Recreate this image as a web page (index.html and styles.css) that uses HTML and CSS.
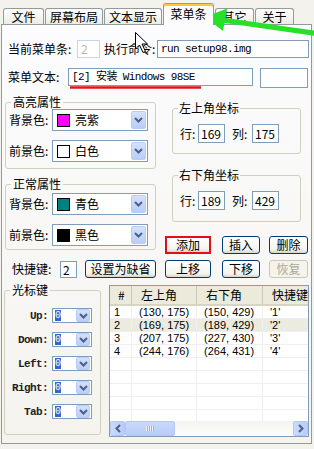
FILE: index.html
```html
<!DOCTYPE html>
<html lang="zh-CN">
<head>
    <meta charset="UTF-8">
    <meta name="viewport" content="width=device-width, initial-scale=1.0">
    <title>菜单条设置</title>
    <link rel="stylesheet" href="styles.css">
</head>
<body>
    <div class="tabs">
        <div class="tab tab-file">文件</div>
        <div class="tab tab-screen">屏幕布局</div>
        <div class="tab tab-text">文本显示</div>
        <div class="tab tab-menu active">菜单条</div>
        <div class="tab tab-other">其它</div>
        <div class="tab tab-about">关于</div>
    </div>

    <div class="page">
        <div class="row row-top">
            <label class="lbl lbl-cur">当前菜单条:</label>
            <input class="edit edit-idx" type="text" value="2" disabled>
            <label class="lbl lbl-cmd">执行命令:</label>
            <input class="edit edit-cmd mono" type="text" value="run setup98.img">
        </div>

        <div class="row row-text">
            <label class="lbl lbl-text">菜单文本:</label>
            <input class="edit edit-text mono" type="text" value="[2] 安装 Windows 98SE">
            <input class="edit edit-extra" type="text" value="">
        </div>

        <div class="middle">
            <div class="col-left">
                <fieldset class="group group-hi">
                    <legend>高亮属性</legend>
                    <div class="field">
                        <label class="lbl-color">背景色:</label>
                        <div class="combo">
                            <span class="swatch sw-magenta"></span>
                            <span class="combo-text">亮紫</span>
                            <span class="drop">
                                <svg width="9" height="6" viewBox="0 0 9 6"><path d="M1 1 L4.5 4.5 L8 1" fill="none" stroke="#4d6185" stroke-width="2"/></svg>
                            </span>
                        </div>
                    </div>
                    <div class="field">
                        <label class="lbl-color">前景色:</label>
                        <div class="combo">
                            <span class="swatch sw-white"></span>
                            <span class="combo-text">白色</span>
                            <span class="drop">
                                <svg width="9" height="6" viewBox="0 0 9 6"><path d="M1 1 L4.5 4.5 L8 1" fill="none" stroke="#4d6185" stroke-width="2"/></svg>
                            </span>
                        </div>
                    </div>
                </fieldset>

                <fieldset class="group group-normal">
                    <legend>正常属性</legend>
                    <div class="field">
                        <label class="lbl-color">背景色:</label>
                        <div class="combo">
                            <span class="swatch sw-teal"></span>
                            <span class="combo-text">青色</span>
                            <span class="drop">
                                <svg width="9" height="6" viewBox="0 0 9 6"><path d="M1 1 L4.5 4.5 L8 1" fill="none" stroke="#4d6185" stroke-width="2"/></svg>
                            </span>
                        </div>
                    </div>
                    <div class="field">
                        <label class="lbl-color">前景色:</label>
                        <div class="combo">
                            <span class="swatch sw-black"></span>
                            <span class="combo-text">黑色</span>
                            <span class="drop">
                                <svg width="9" height="6" viewBox="0 0 9 6"><path d="M1 1 L4.5 4.5 L8 1" fill="none" stroke="#4d6185" stroke-width="2"/></svg>
                            </span>
                        </div>
                    </div>
                </fieldset>

                <div class="hotkey-row">
                    <label class="lbl-key">快捷键:</label>
                    <input class="edit edit-key" type="text" value="2">
                    <button class="btn btn-default">设置为缺省</button>
                </div>
            </div>

            <div class="col-right">
                <fieldset class="group group-pos">
                    <legend>左上角坐标</legend>
                    <div class="pos-row">
                        <label class="lbl-row">行:</label>
                        <input class="edit edit-pos" type="text" value="169">
                        <label class="lbl-col">列:</label>
                        <input class="edit edit-pos" type="text" value="175">
                    </div>
                </fieldset>

                <fieldset class="group group-pos group-pos2">
                    <legend>右下角坐标</legend>
                    <div class="pos-row">
                        <label class="lbl-row">行:</label>
                        <input class="edit edit-pos" type="text" value="189">
                        <label class="lbl-col">列:</label>
                        <input class="edit edit-pos" type="text" value="429">
                    </div>
                </fieldset>

                <div class="btn-row btn-row-1">
                    <button class="btn btn-a marked">添加</button>
                    <button class="btn btn-b">插入</button>
                    <button class="btn btn-c">删除</button>
                </div>
                <div class="btn-row btn-row-2">
                    <button class="btn btn-a">上移</button>
                    <button class="btn btn-b">下移</button>
                    <button class="btn btn-c" disabled>恢复</button>
                </div>
            </div>
        </div>

        <div class="bottom">
            <fieldset class="group group-keys">
                <legend>光标键</legend>
                <div class="key-row">
                    <label class="lbl-dir">Up:</label>
                    <div class="combo combo-small"><span class="sel">0</span><span class="drop"><svg width="9" height="6" viewBox="0 0 9 6"><path d="M1 1 L4.5 4.5 L8 1" fill="none" stroke="#4d6185" stroke-width="2"/></svg></span></div>
                </div>
                <div class="key-row">
                    <label class="lbl-dir">Down:</label>
                    <div class="combo combo-small"><span class="sel">0</span><span class="drop"><svg width="9" height="6" viewBox="0 0 9 6"><path d="M1 1 L4.5 4.5 L8 1" fill="none" stroke="#4d6185" stroke-width="2"/></svg></span></div>
                </div>
                <div class="key-row">
                    <label class="lbl-dir">Left:</label>
                    <div class="combo combo-small"><span class="sel">0</span><span class="drop"><svg width="9" height="6" viewBox="0 0 9 6"><path d="M1 1 L4.5 4.5 L8 1" fill="none" stroke="#4d6185" stroke-width="2"/></svg></span></div>
                </div>
                <div class="key-row">
                    <label class="lbl-dir">Right:</label>
                    <div class="combo combo-small"><span class="sel">0</span><span class="drop"><svg width="9" height="6" viewBox="0 0 9 6"><path d="M1 1 L4.5 4.5 L8 1" fill="none" stroke="#4d6185" stroke-width="2"/></svg></span></div>
                </div>
                <div class="key-row">
                    <label class="lbl-dir">Tab:</label>
                    <div class="combo combo-small"><span class="sel">0</span><span class="drop"><svg width="9" height="6" viewBox="0 0 9 6"><path d="M1 1 L4.5 4.5 L8 1" fill="none" stroke="#4d6185" stroke-width="2"/></svg></span></div>
                </div>
            </fieldset>

            <div class="list">
                <div class="list-head">
                    <span class="lh lh-no">#</span>
                    <span class="lh">左上角</span>
                    <span class="lh">右下角</span>
                    <span class="lh">快捷键</span>
                </div>
                <div class="list-body">
                    <div class="list-row"><span>1</span><span>(130, 175)</span><span>(150, 429)</span><span>'1'</span></div>
                    <div class="list-row selected"><span>2</span><span>(169, 175)</span><span>(189, 429)</span><span>'2'</span></div>
                    <div class="list-row"><span>3</span><span>(207, 175)</span><span>(227, 430)</span><span>'3'</span></div>
                    <div class="list-row"><span>4</span><span>(244, 176)</span><span>(264, 431)</span><span>'4'</span></div>
                    <div class="list-row"><span></span><span></span><span></span><span></span></div>
                    <div class="list-row"><span></span><span></span><span></span><span></span></div>
                    <div class="list-row"><span></span><span></span><span></span><span></span></div>
                    <div class="list-row"><span></span><span></span><span></span><span></span></div>
                    <div class="list-row"><span></span><span></span><span></span><span></span></div>
                </div>
                <div class="hscroll">
                    <span class="sb-btn">
                        <svg width="6" height="9" viewBox="0 0 6 9"><path d="M5 1 L1.5 4.5 L5 8" fill="none" stroke="#4d6185" stroke-width="2"/></svg>
                    </span>
                    <span class="sb-thumb">
                        <svg width="8" height="5" viewBox="0 0 8 5"><path d="M0.5 0 V5 M2.5 0 V5 M4.5 0 V5 M6.5 0 V5" stroke="#eef3ff" stroke-width="1"/><path d="M1.5 0 V5 M3.5 0 V5 M5.5 0 V5 M7.5 0 V5" stroke="#8cb0f8" stroke-width="1"/></svg>
                    </span>
                    <span class="sb-track"></span>
                    <span class="sb-btn">
                        <svg width="6" height="9" viewBox="0 0 6 9"><path d="M1 1 L4.5 4.5 L1 8" fill="none" stroke="#4d6185" stroke-width="2"/></svg>
                    </span>
                </div>
            </div>
        </div>
    </div>

    <!-- annotations drawn over the screenshot -->
    <svg class="overlay" width="314" height="449" viewBox="0 0 314 449">
        <line x1="70" y1="87.5" x2="201" y2="87.5" stroke="#e01414" stroke-width="2.5"/>
        <line x1="320" y1="34" x2="222" y2="20" stroke="#27e027" stroke-width="5"/>
        <polygon points="205,17 227,8.5 223,31" fill="#27e027"/>
        <path d="M135.5 32.5 V49 L139.5 45 L143 52.5 L145.5 51.5 L142 44 L147.5 44 Z" fill="#fff" stroke="#000" stroke-width="1"/>
    </svg>
</body>
</html>
```

FILE: styles.css
```css
* {
    box-sizing: border-box;
    margin: 0;
    padding: 0;
}

body {
    position: relative;
    width: 314px;
    height: 449px;
    overflow: hidden;
    background-color: #f3f2ec;
    font-family: "Noto Sans CJK SC", sans-serif;
    font-size: 12px;
    line-height: 14px;
    color: #000;
}

input, button {
    font: inherit;
    color: inherit;
}

.mono {
    font-family: "Liberation Mono", "Noto Sans CJK SC", monospace;
    font-size: 11px;
    letter-spacing: -0.6px;
}

/* tab strip */
.tabs {
    display: flex;
    align-items: flex-end;
    height: 24px;
    padding-left: 3px;
}

.tab {
    height: 16px;
    margin-right: 1px;
    border: 1px solid #919b9c;
    border-bottom: none;
    border-radius: 3px 3px 0 0;
    background: linear-gradient(#ffffff, #ecebe5);
    text-align: center;
    line-height: 15px;
}

.tab-file { width: 41px; }
.tab-screen { width: 58px; }
.tab-text { width: 58px; }
.tab-other { width: 39px; }
.tab-about { width: 39px; }

.tab.active {
    position: relative;
    z-index: 1;
    width: 51px;
    height: 22px;
    margin-bottom: -1px;
    padding-top: 3px;
    border-top-color: #e68b2c;
    background: #fcfcfe;
    box-shadow: inset 0 2px 0 #ffc83c;
    line-height: 14px;
}

/* page */
.page {
    width: 311px;
    height: 420px;
    margin-left: 1px;
    border: 1px solid #919b9c;
    background: linear-gradient(#fcfcfe, #f4f3ee);
}

.row {
    display: flex;
    align-items: flex-start;
    padding-left: 6px;
    line-height: 18px;
}

.row-top {
    margin-top: 15px;
    height: 18px;
}

.row-text {
    margin-top: 10px;
    height: 20px;
}

.lbl-cur { width: 69px; }
.lbl-cmd { width: 53px; margin-left: 4px; }
.lbl-text { width: 60px; }

.edit {
    height: 18px;
    border: 1px solid #7f9db9;
    background: #fff;
    padding: 0 3px;
    outline: none;
}

.edit:disabled {
    border-color: #c9d6e3;
    color: #b8b6a8;
}

.edit-idx { width: 23px; }
.edit-cmd { width: 152px; }
.edit-text { width: 185px; }
.edit-extra { width: 48px; height: 20px; margin-left: 7px; }

/* middle area */
.middle {
    display: flex;
}

.col-left {
    width: 154px;
    padding-left: 3px;
}

.col-right {
    width: 152px;
    padding-left: 9px;
}

.group {
    min-width: 0;
    border: 1px solid #d0d0bf;
    border-radius: 3px;
}

.group legend {
    padding: 0 2px;
    line-height: 14px;
}

.group-hi,
.group-normal {
    width: 151px;
    padding: 0 4px 6px 3px;
}

.group-hi legend,
.group-normal legend {
    margin-left: 2px;
}

.group-hi {
    margin-top: 7px;
}

.group-normal {
    margin-top: 8px;
    padding-top: 2px;
    padding-bottom: 3px;
}

.field {
    display: flex;
    align-items: center;
    height: 22px;
}

.field + .field {
    margin-top: 9px;
}

.lbl-color {
    width: 43px;
}

.combo {
    display: flex;
    align-items: center;
    width: 96px;
    height: 22px;
    padding: 0 1px 0 4px;
    border: 1px solid #7f9db9;
    background: #fff;
}

.swatch {
    width: 13px;
    height: 13px;
    border: 1px solid #000;
}

.sw-magenta { background: #ff00ff; }
.sw-white { background: #fff; }
.sw-teal { background: #008080; }
.sw-black { background: #000; }

.combo-text {
    margin-left: 5px;
}

.drop {
    display: flex;
    align-items: center;
    justify-content: center;
    width: 15px;
    height: 18px;
    margin-left: auto;
    border: 1px solid #b9cdf6;
    border-radius: 2px;
    background: linear-gradient(#d4e1fd, #b9cdf8);
}

.hotkey-row {
    display: flex;
    align-items: center;
    height: 18px;
    margin-top: 10px;
    padding-left: 7px;
}

.lbl-key {
    width: 48px;
}

.edit-key {
    width: 17px;
    height: 17px;
    padding: 0 2px;
}

.btn {
    height: 18px;
    border: 1px solid #003c74;
    border-radius: 3px;
    background: linear-gradient(#ffffff, #f3f3ee 80%, #d8d3c6);
    line-height: 16px;
    text-align: center;
}

.btn:disabled {
    border-color: #c9c7ba;
    color: #aca899;
    background: #f5f4ea;
}

.btn-default {
    width: 71px;
    margin-left: 8px;
}

.group-pos {
    width: 129px;
    margin-left: 7px;
    margin-top: 13px;
    padding: 9px 0 10px 7px;
}

.group-pos legend {
    margin-left: -2px;
    padding: 0 1px;
}

.group-pos2 {
    margin-top: 14px;
    padding-bottom: 11px;
}

.pos-row {
    display: flex;
    align-items: center;
    height: 19px;
}

.lbl-row { width: 18px; }
.lbl-col { width: 20px; margin-left: 7px; }

.edit-pos {
    width: 27px;
    height: 19px;
    padding: 0 2px;
}

.btn-row {
    display: flex;
}

.btn-row-1 { margin-top: 14px; }
.btn-row-2 { margin-top: 6px; }

.btn-a { width: 46px; }
.btn-b { width: 38px; margin-left: 11px; }
.btn-c { width: 39px; margin-left: 9px; }

.btn.marked {
    border: 2px solid #e0101a;
    border-radius: 0;
    line-height: 14px;
}

/* bottom area */
.bottom {
    display: flex;
    align-items: flex-start;
    padding-left: 2px;
}

.group-keys {
    width: 97px;
    margin-top: 5px;
    padding: 11px 0 15px 1px;
}

.group-keys legend {
    margin-left: 4px;
}

.key-row {
    display: flex;
    align-items: center;
    height: 15px;
}

.key-row + .key-row {
    margin-top: 9px;
}

.lbl-dir {
    width: 46px;
    padding-right: 4px;
    text-align: right;
    font-family: "Liberation Mono", monospace;
    font-size: 11px;
    letter-spacing: -0.6px;
    font-weight: bold;
    color: #222;
}

.combo-small {
    width: 40px;
    height: 15px;
    padding: 0 1px 0 2px;
}

.combo-small .drop {
    width: 14px;
    height: 13px;
}

.sel {
    width: 6px;
    height: 11px;
    background: #316ac5;
    color: #fff;
    font-family: "Liberation Mono", monospace;
    font-size: 10px;
    line-height: 11px;
}

/* list view */
.list {
    display: flex;
    flex-direction: column;
    width: 200px;
    height: 152px;
    margin: 7px 0 0 8px;
    border: 1px solid #7f9db9;
    background: #fff;
    overflow: hidden;
}

.list-head,
.list-row {
    display: grid;
    grid-template-columns: 22px 65px 66px 80px;
    flex-shrink: 0;
}

.list-head {
    height: 20px;
    background: #ebeadb;
    border-bottom: 2px solid #d8d4c2;
}

.lh {
    padding-left: 9px;
    border-right: 1px solid #cbc8b6;
    line-height: 18px;
}

.lh-no {
    padding-left: 8px;
}

.list-body {
    flex: 1;
    overflow: hidden;
}

.list-row {
    height: 13px;
    font-family: "Liberation Sans", sans-serif;
    font-size: 11px;
    line-height: 12px;
}

.list-row span {
    padding-left: 7px;
    border-right: 1px solid #efefef;
    border-bottom: 1px solid #efefef;
    white-space: nowrap;
}

.list-row span:first-child {
    padding-left: 4px;
}

.list-row.selected {
    background: #ecebdf;
}

.hscroll {
    display: flex;
    height: 15px;
    flex-shrink: 0;
    background: linear-gradient(#f4f4f0, #fcfcfa);
}

.sb-btn,
.sb-thumb {
    display: flex;
    align-items: center;
    justify-content: center;
    border: 1px solid #b4c8f6;
    border-radius: 2px;
    background: linear-gradient(90deg, #cbdafd, #b9ccf8);
}

.sb-btn {
    width: 15px;
}

.sb-thumb {
    width: 50px;
    background: linear-gradient(#c9d8fc, #b9ccf7);
}

.sb-track {
    flex: 1;
}

.overlay {
    position: absolute;
    top: 0;
    left: 0;
    pointer-events: none;
}
```
